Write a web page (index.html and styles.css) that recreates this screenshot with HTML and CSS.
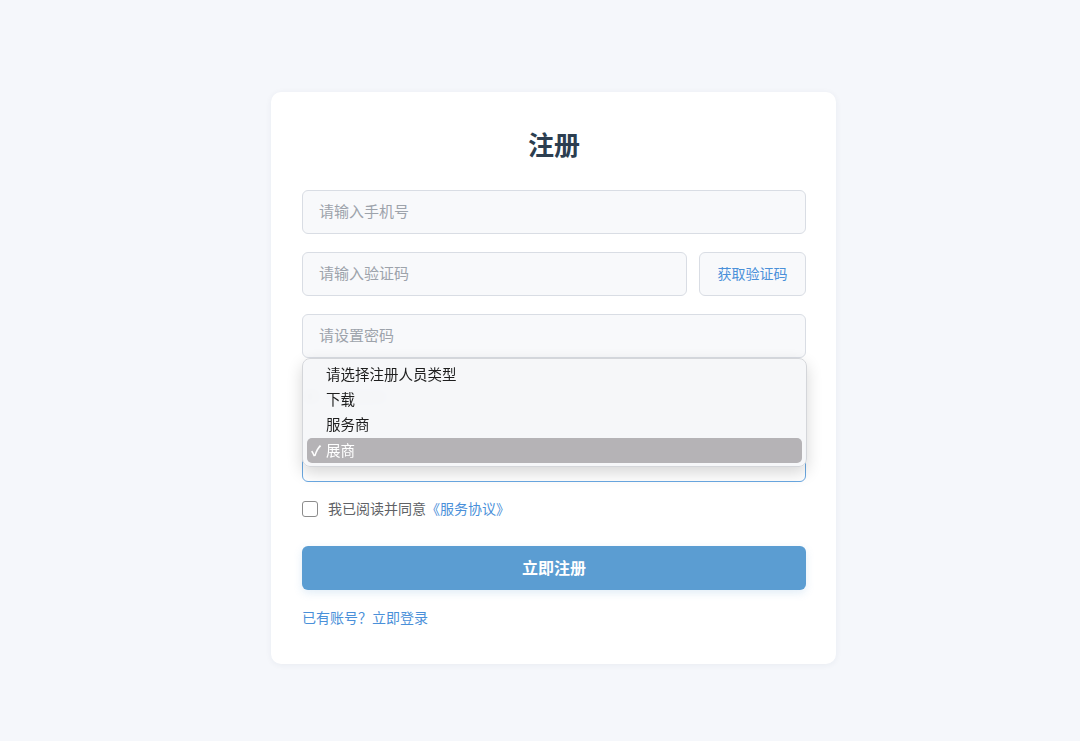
FILE: index.html
```html
<!DOCTYPE html>
<html lang="zh-CN">
<head>
<meta charset="utf-8">
<title>注册</title>
<link rel="stylesheet" href="styles.css">
</head>
<body>
<div class="page">
  <div class="card">
    <h1 class="title">注册</h1>
    <div class="form">
      <div class="field"><span class="placeholder">请输入手机号</span></div>
      <div class="code-row">
        <div class="field grow"><span class="placeholder">请输入验证码</span></div>
        <div class="code-btn"><span>获取验证码</span></div>
      </div>
      <div class="field"><span class="placeholder">请设置密码</span></div>
      <div class="field"><span class="dot"></span><span class="blur-bar"></span></div>
      <div class="select-wrap">
        <div class="field select"></div>
        <div class="popup">
          <div class="opt">请选择注册人员类型</div>
          <div class="opt">下载</div>
          <div class="opt">服务商</div>
          <div class="opt selected"><span class="check">✓</span>展商</div>
        </div>
      </div>
      <label class="agree">
        <span class="box"></span>
        <span class="agree-text">我已阅读并同意<span class="link">《服务协议》</span></span>
      </label>
      <div class="submit"><span>立即注册</span></div>
      <div class="login link">已有账号？立即登录</div>
    </div>
  </div>
</div>
</body>
</html>
```
FILE: styles.css
```css
* { box-sizing: border-box; }
html, body { margin: 0; padding: 0; }
body {
  background: #f5f7fb;
  font-family: "Noto Sans CJK SC", "Noto Sans", sans-serif;
  width: 1080px;
  height: 741px;
  overflow: hidden;
}
.page {
  padding: 92px 0 0 271px;
}
.card {
  width: 565px;
  background: #ffffff;
  border-radius: 10px;
  box-shadow: 0 1px 6px rgba(30, 50, 90, 0.06);
  padding: 34px 30px 37px 31px;
}
.title {
  margin: 0 0 28px;
  text-align: center;
  font-size: 26px;
  line-height: 36px;
  font-weight: 700;
  color: #2c3e50;
}
.form {
  display: flex;
  flex-direction: column;
}
.field {
  height: 44px;
  border: 1px solid #d9dde4;
  border-radius: 6px;
  background: #f8f9fb;
  display: flex;
  align-items: center;
  padding: 0 16px 3px;
  margin-bottom: 18px;
  font-size: 15px;
}
.placeholder { color: #9da3ab; }
.dot {
  width: 7px; height: 7px; border-radius: 50%;
  background: #666; margin-left: -11px; margin-right: 12px;
}
.blur-bar {
  width: 60px; height: 8px; border-radius: 4px;
  background: #c9ccd1;
}
.code-row {
  display: flex;
  gap: 12px;
}
.grow { flex: 1; }
.code-btn {
  width: 107px;
  height: 44px;
  border: 1px solid #d9dde4;
  border-radius: 6px;
  background: #f8f9fb;
  color: #4a90d9;
  font-size: 14px;
  display: flex;
  align-items: center;
  justify-content: center;
  padding-bottom: 2px;
}
.select-wrap {
  position: relative;
}
.select {
  border-color: #6aa8e2;
  background: #ffffff;
}
.popup {
  position: absolute;
  left: 0;
  right: -1px;
  top: -80px;
  height: 109px;
  border-radius: 8px;
  background: rgba(246, 247, 249, 0.95);
  backdrop-filter: blur(6px);
  border: 1px solid #d4d6da;
  box-shadow: 0 6px 16px rgba(0, 0, 0, 0.16);
  padding: 3px 4px 4px 4px;
  font-size: 14.5px;
  color: #1e1e1e;
}
.opt {
  height: 25px;
  line-height: 24px;
  padding-left: 19px;
  position: relative;
  border-radius: 5px;
}
.opt.selected {
  background: #b5b3b6;
  color: #ffffff;
  margin-top: 1px;
}
.check {
  position: absolute;
  left: 4px;
  top: 0;
  font-size: 14px;
  font-weight: 700;
}
.agree {
  display: flex;
  align-items: center;
  height: 18px;
  font-size: 14px;
  line-height: 18px;
  color: #606266;
}
.agree-text { margin-top: -2px; }
.box {
  width: 16px;
  height: 16px;
  border: 1.5px solid #8c8c8c;
  border-radius: 3px;
  background: #fff;
  margin-right: 10px;
}
.link { color: #4a90d9; }
.submit {
  margin-top: 28px;
  height: 44px;
  border-radius: 6px;
  background: #5b9dd2;
  color: #ffffff;
  font-size: 16px;
  font-weight: 700;
  display: flex;
  align-items: center;
  justify-content: center;
  padding-bottom: 2px;
  box-shadow: 0 3px 8px rgba(91, 157, 210, 0.18);
}
.login {
  margin-top: 17px;
  font-size: 14px;
  line-height: 20px;
}
```
